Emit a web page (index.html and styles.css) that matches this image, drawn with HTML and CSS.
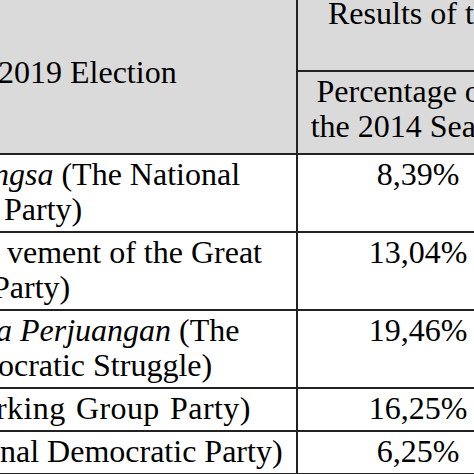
FILE: index.html
```html
<!DOCTYPE html>
<html lang="en">
<head>
    <meta charset="UTF-8">
    <meta name="viewport" content="width=device-width, initial-scale=1.0">
    <title>Seats of the 2019 Election</title>
    <link rel="stylesheet" href="styles.css">
</head>
<body>
    <div class="frame">
        <table class="seats">
            <thead>
                <tr>
                    <th class="party-head" rowspan="2"><span class="ln cut-hd">2019 Election</span></th>
                    <th class="group-head">Results of the Legislative Election</th>
                </tr>
                <tr>
                    <th class="sub-head">Percentage of<br>the 2014 Seats</th>
                </tr>
            </thead>
            <tbody>
                <tr>
                    <td class="party">
                        <span class="ln cut-1a"><i>ngsa</i> (The National</span>
                        <span class="ln cut-1b">Party)</span>
                    </td>
                    <td class="value">8,39%</td>
                </tr>
                <tr>
                    <td class="party">
                        <span class="ln cut-2a">vement of the Great</span>
                        <span class="ln cut-2b">Party)</span>
                    </td>
                    <td class="value">13,04%</td>
                </tr>
                <tr>
                    <td class="party">
                        <span class="ln cut-3a"><i>a Perjuangan</i> (The</span>
                        <span class="ln cut-3b">ocratic Struggle)</span>
                    </td>
                    <td class="value">19,46%</td>
                </tr>
                <tr>
                    <td class="party">
                        <span class="ln cut-4">rking Group Party)</span>
                    </td>
                    <td class="value">16,25%</td>
                </tr>
                <tr>
                    <td class="party">
                        <span class="ln cut-5">nal Democratic Party)</span>
                    </td>
                    <td class="value">6,25%</td>
                </tr>
            </tbody>
        </table>
    </div>
</body>
</html>
```

FILE: styles.css
```css
body {
    margin: 0;
    background-color: #ffffff;
    overflow: hidden;
    font-family: "Liberation Serif", Tinos, "Times New Roman", Times, serif;
}

.frame {
    width: 474px;
    height: 474px;
    overflow: hidden;
}

.seats {
    margin-top: -6px;
    border-collapse: collapse;
    table-layout: fixed;
    width: 540px;
    font-family: "Liberation Serif", Tinos, "Times New Roman", Times, serif;
    font-size: 32px;
    line-height: 35px;
    color: #000;
}

.seats th,
.seats td {
    border: 2px solid #222;
    padding: 2px 0 4px;
    font-weight: normal;
    vertical-align: top;
}

.seats thead th {
    background-color: #dadada;
}

.party-head {
    width: 296px;
    vertical-align: middle !important;
    text-align: left;
    border-left: none !important;
    border-top: none !important;
}

.group-head {
    height: 70px;
    text-align: left;
    padding-left: 30px !important;
    white-space: nowrap;
    overflow: hidden;
    border-top: none !important;
}

.sub-head {
    height: 75px;
    text-align: center;
    padding-right: 28px !important;
    white-space: nowrap;
}

.party {
    text-align: left;
    overflow: hidden;
    border-left: none !important;
}

.value {
    text-align: center;
}

.ln {
    display: block;
    white-space: nowrap;
}

.cut-hd { margin-left: -2px; }
.cut-1a { margin-left: -7px; }
.cut-1b { margin-left: 4px; }
.cut-2a { margin-left: 7px; }
.cut-2b { margin-left: -8px; }
.cut-3a { margin-left: -4px; }
.cut-3b { margin-left: -2px; }
.cut-4 { margin-left: -4px; letter-spacing: 0.4px; word-spacing: 2px; }
.cut-5 { margin-left: 0; }
```
